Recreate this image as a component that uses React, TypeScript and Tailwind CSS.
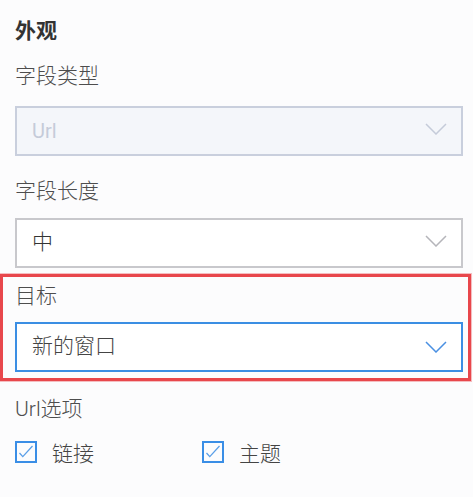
import React from "react";

const Chevron = ({ color }: { color: string }) => (
  <svg width="22" height="12" viewBox="0 0 22 12" fill="none">
    <path d="M1 1 L11 11 L21 1" stroke={color} strokeWidth="1.5" />
  </svg>
);

const Check = () => (
  <div className="w-[22px] h-[22px] border-2 border-[#3a8ee6] flex items-center justify-center shrink-0">
    <svg width="18" height="18" viewBox="0 0 18 18" fill="none">
      <path d="M2.5 10 L5.8 13.6 L15.5 3" stroke="#5a9fe8" strokeWidth="1.3" />
    </svg>
  </div>
);

export default function App() {
  return (
    <div
      className="w-[473px] h-[497px] bg-[#fcfcfd] pl-[15px] pr-[10px] pt-[16px] overflow-hidden"
      style={{ fontFamily: "Roboto, 'Noto Sans CJK SC', sans-serif" }}
    >
      <div className="text-[21px] leading-[30px] font-bold text-[#333]">外观</div>

      <div className="mt-[15px] text-[21px] leading-[30px] font-light text-[#4d4d4d]">字段类型</div>
      <div className="mt-[15px] h-[50px] border-2 border-[#c9cfdd] bg-[#f4f6fa] flex items-center justify-between pl-[15px] pr-[14px]">
        <span className="text-[20px] text-[#c5cbd9]">Url</span>
        <div className="-mt-[5px]">
          <Chevron color="#c5cbd9" />
        </div>
      </div>

      <div className="mt-[20px] text-[21px] leading-[30px] font-light text-[#4d4d4d]">字段长度</div>
      <div className="mt-[12px] h-[50px] border-2 border-[#c8c8cc] bg-white flex items-center justify-between pl-[15px] pr-[14px]">
        <span className="text-[21px] font-light text-[#333]">中</span>
        <div className="-mt-[5px]">
          <Chevron color="#b5b5ba" />
        </div>
      </div>

      <div className="mt-[6px] -ml-[15px] -mr-[8px] border-[3px] border-[#e8474c] pl-[12px] pr-[5px] pt-[4px] pb-[6px] shadow-[0_0_0_1px_rgba(232,71,76,0.35)]">
        <div className="text-[21px] leading-[30px] font-light text-[#4d4d4d]">目标</div>
        <div className="mt-[11px] h-[50px] border-2 border-[#3b8ee3] bg-white flex items-center justify-between pl-[15px] pr-[14px]">
          <span className="text-[21px] font-light text-[#444]">新的窗口</span>
          <div className="-mt-[1px]">
            <Chevron color="#4a90e2" />
          </div>
        </div>
      </div>

      <div className="mt-[13px] text-[21px] leading-[30px] font-light text-[#4d4d4d]">Url选项</div>
      <div className="mt-[11px] flex items-center">
        <div className="w-[187px] flex items-center">
          <Check />
          <span className="ml-[15px] text-[21px] leading-[30px] font-light text-[#444] mt-[4px]">链接</span>
        </div>
        <div className="flex items-center">
          <Check />
          <span className="ml-[15px] text-[21px] leading-[30px] font-light text-[#444] mt-[4px]">主题</span>
        </div>
      </div>
    </div>
  );
}
